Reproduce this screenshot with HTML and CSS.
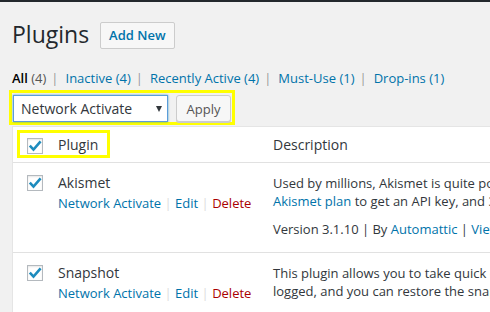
FILE: index.html
```html
<!DOCTYPE html>
<html lang="en">
<head>
  <meta charset="UTF-8" />
  <title>Plugins</title>
  <link rel="stylesheet" href="styles.css">
</head>
<body>
  <div class="adminbar"></div>

  <div class="wrap">
    <div class="title-row">
      <h1>Plugins</h1>
      <a class="add-new" href="#">Add New</a>
    </div>

    <div class="views">
      <a class="current" href="#">All <span class="count">(4)</span></a><span class="sep">|</span><a href="#">Inactive <span class="count">(4)</span></a><span class="sep">|</span><a href="#">Recently Active <span class="count">(4)</span></a><span class="sep">|</span><a href="#">Must-Use <span class="count">(1)</span></a><span class="sep">|</span><a href="#">Drop-ins <span class="count">(1)</span></a>
    </div>

    <div class="bulk">
      <div class="select">Network Activate<span class="caret"></span></div>
      <button class="apply">Apply</button>
    </div>

    <div class="plugins">
      <div class="mark"></div>

      <div class="row head">
        <div class="check"><span class="cb"><svg viewBox="0 0 16 16" width="16" height="16"><path d="M2.8 7.6 L6.5 11.6 L13.6 3.4" /></svg></span></div>
        <div class="name">Plugin</div>
        <div class="desc">Description</div>
      </div>

      <div class="row">
        <div class="check"><span class="cb"><svg viewBox="0 0 16 16" width="16" height="16"><path d="M2.8 7.6 L6.5 11.6 L13.6 3.4" /></svg></span></div>
        <div class="name">
          <div class="title">Akismet</div>
          <div class="actions"><a href="#">Network Activate</a> <span class="sep">|</span> <a href="#">Edit</a> <span class="sep">|</span> <a class="delete" href="#">Delete</a></div>
        </div>
        <div class="desc">
          <p>Used by millions, Akismet is quite possibly the best way in the world to protect your blog from spam. It keeps your site protected even while you sleep. To get started: 1) Click the "Activate" link to the left of this description, 2) <a href="#">Sign up for an</a><br><a href="#">Akismet plan</a> to get an API key, and 3) Go to your Akismet configuration page, and save your API key.</p>
          <p class="meta">Version 3.1.10 | By <a href="#">Automattic</a> | <a href="#">View details</a></p>
        </div>
      </div>

      <div class="row">
        <div class="check"><span class="cb"><svg viewBox="0 0 16 16" width="16" height="16"><path d="M2.8 7.6 L6.5 11.6 L13.6 3.4" /></svg></span></div>
        <div class="name">
          <div class="title">Snapshot</div>
          <div class="actions"><a href="#">Network Activate</a> <span class="sep">|</span> <a href="#">Edit</a> <span class="sep">|</span> <a class="delete" href="#">Delete</a></div>
        </div>
        <div class="desc">
          <p>This plugin allows you to take quick on-demand backup snapshots of your working WordPress database. You can select from the default WordPress tables as well as custom plugin tables. All snapshots are<br>logged, and you can restore the snapshot as needed.</p>
        </div>
      </div>
    </div>
  </div>
</body>
</html>
```

FILE: styles.css
```css
body {
  margin: 0;
  background: #f1f1f1;
  font-family: "Open Sans", sans-serif;
  font-size: 13px;
  color: #32373c;
  overflow: hidden;
}

a {
  color: #0073aa;
  text-decoration: none;
}

.adminbar {
  height: 2px;
  background: #23282d;
}

.wrap {
  padding-left: 12px;
}

.title-row {
  display: flex;
  align-items: flex-start;
  padding-top: 18px;
}

h1 {
  margin: 0 11px 0 0;
  font-size: 23px;
  font-weight: 400;
  line-height: 29px;
  color: #23282d;
}

.add-new {
  margin-top: 2px;
  height: 25px;
  line-height: 25px;
  padding: 0 8px;
  border: 1px solid #ccc;
  border-radius: 2px;
  background: #f7f7f7;
  font-size: 13px;
  font-weight: 600;
}

.views {
  margin-top: 19px;
  line-height: 20px;
  color: #555;
  white-space: nowrap;
}

.views .current {
  color: #000;
  font-weight: 600;
}

.views .current .count {
  color: #555;
  font-weight: 400;
}

.views .sep {
  margin: 0 7px 0 5px;
  color: #999;
}

.bulk {
  display: flex;
  gap: 8px;
  width: fit-content;
  margin: 2px 0 0 -3px;
  padding: 2px 1px 0 1px;
  border: 3px solid #ffff00;
}

.select {
  box-sizing: border-box;
  width: 155px;
  height: 27px;
  display: flex;
  align-items: center;
  justify-content: space-between;
  padding: 0 5px 0 7px;
  background: #fff;
  border: 1px solid #5b9dd9;
  box-shadow: 0 0 2px rgba(30, 140, 190, 0.8);
  font-size: 14px;
  color: #32373c;
}

.caret {
  border-left: 3px solid transparent;
  border-right: 3px solid transparent;
  border-top: 6px solid #32373c;
}

.apply {
  box-sizing: border-box;
  width: 55px;
  height: 27px;
  padding: 0;
  background: #f7f7f7;
  border: 1px solid #ccc;
  border-radius: 3px;
  box-shadow: 0 1px 0 #ccc;
  font-family: "Open Sans", sans-serif;
  font-size: 13px;
  color: #555;
}

.plugins {
  position: relative;
  width: 720px;
  margin-top: 1px;
  background: #fff;
  border: 1px solid #e5e5e5;
}

.mark {
  position: absolute;
  left: 4px;
  top: 3px;
  width: 93px;
  height: 28px;
  box-sizing: border-box;
  border: 3px solid #ffff00;
}

.row {
  display: grid;
  grid-template-columns: 45px 205px 1fr;
  border-bottom: 1px solid #e1e1e1;
}

.row:last-child {
  border-bottom: none;
}

.check {
  padding: 12px 0 0 14px;
}

.cb {
  box-sizing: border-box;
  display: flex;
  width: 16px;
  height: 16px;
  background: #fff;
  border: 1px solid #b4b9be;
  box-shadow: inset 0 1px 2px rgba(0, 0, 0, 0.1);
}

.cb svg {
  margin: -1px;
}

.cb path {
  fill: none;
  stroke: #1e8cbe;
  stroke-width: 2.6;
}

.head .check {
  padding-top: 11px;
}

.head .name,
.head .desc {
  padding: 8px 0;
  font-size: 14px;
  line-height: 19px;
}

.head .desc {
  padding-left: 10px;
}

.name {
  padding-top: 10px;
}

.title {
  font-size: 14px;
  line-height: 19px;
}

.actions {
  margin-top: 2px;
  line-height: 19px;
  white-space: nowrap;
}

.actions .sep {
  color: #ddd;
}

.actions .delete {
  color: #a00;
}

.desc {
  padding: 11px 0 14px 10px;
  line-height: 18px;
  white-space: nowrap;
  overflow: hidden;
}

.desc p {
  margin: 0;
}

.desc .meta {
  margin-top: 10px;
}
```
